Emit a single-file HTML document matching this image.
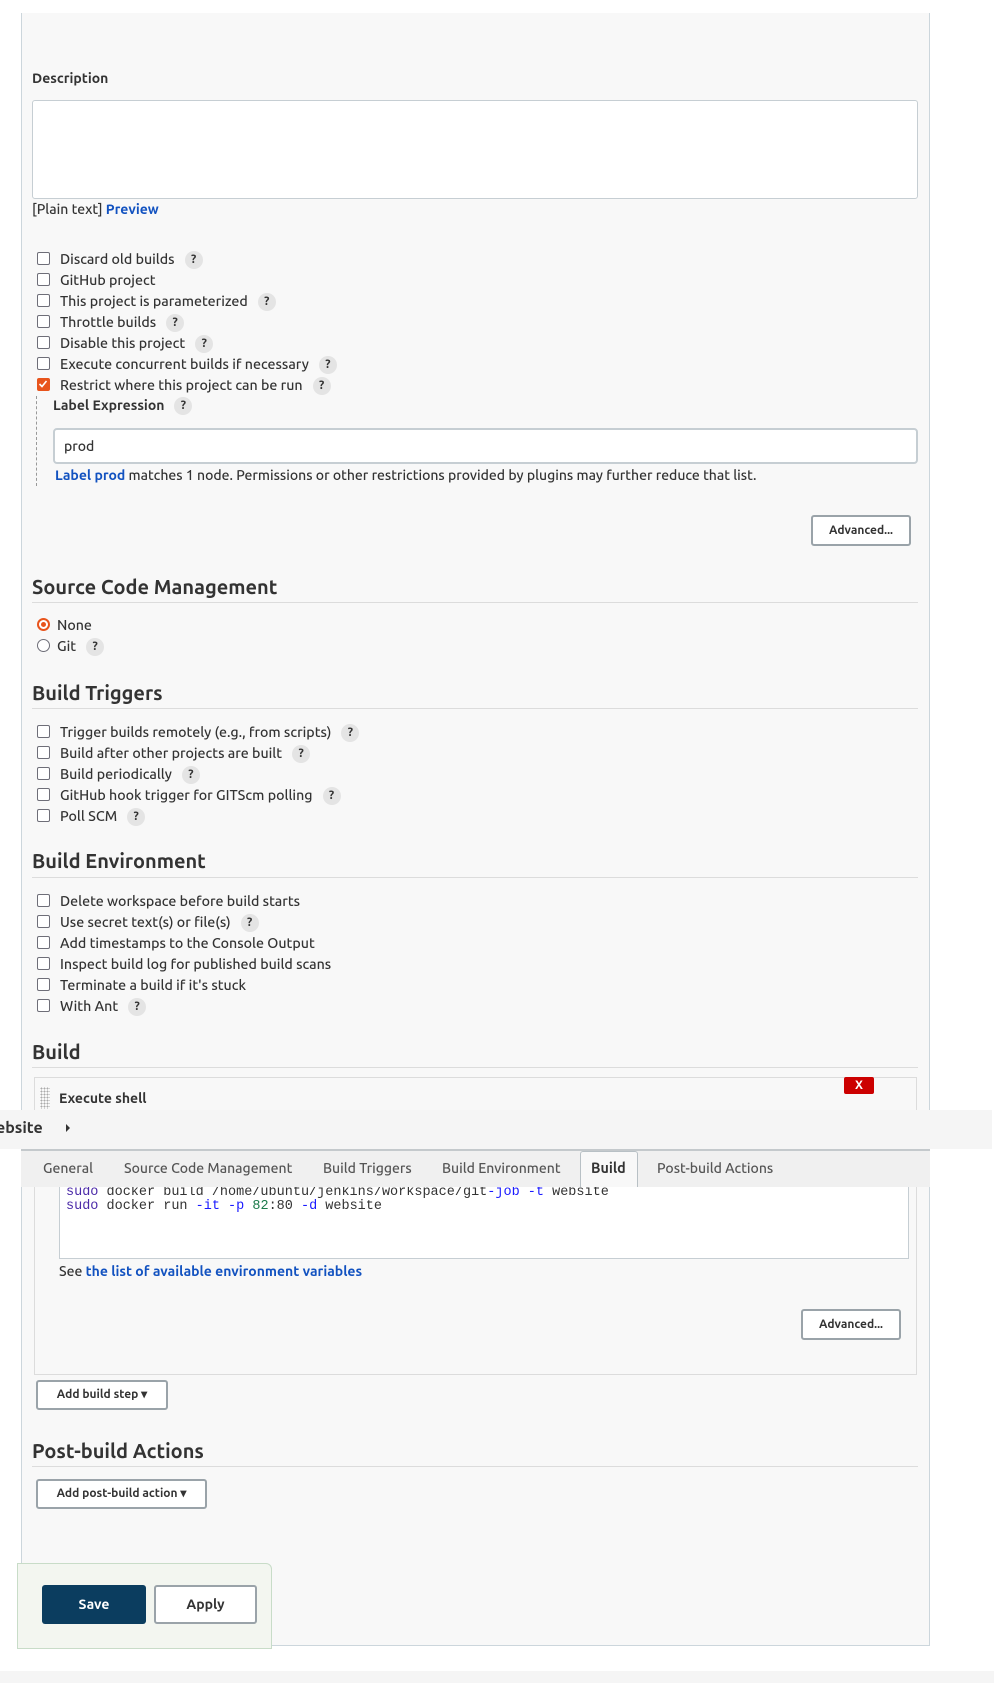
<!DOCTYPE html>
<html><head><meta charset="utf-8">
<style>
*{box-sizing:border-box;margin:0;padding:0}
body{width:994px;height:1683px;background:#fff;font-family:"Ubuntu","Liberation Sans",sans-serif;font-size:14px;color:#333;position:relative;overflow:hidden}
.a{position:absolute;white-space:nowrap}
.panel{position:absolute;left:21px;top:13px;width:909px;height:1633px;background:#f8f8f8;border-left:1px solid #ccd6dc;border-right:1px solid #ccd6dc;border-bottom:1px solid #ccd6dc}
.cb{position:absolute;left:37px;width:13px;height:13px;border:1.5px solid #6e6e78;border-radius:2px;background:#fff}
.cb.on{background:#e8541c;border-color:#e8541c}
.lbl{position:absolute;left:60px;white-space:nowrap;font-size:14.2px;font-weight:500;color:#333;line-height:16px}
.q{display:inline-block;width:18px;height:18px;border-radius:50%;background:#e4e4e4;color:#333;font-weight:bold;font-size:12px;text-align:center;line-height:18px;margin-left:10px;vertical-align:middle}
h2{position:absolute;left:32px;font-size:20px;font-weight:bold;color:#333;white-space:nowrap}
.hr{position:absolute;left:32px;width:886px;height:1px;background:#dcdcdc}
.btn{position:absolute;border:2px solid #9aa3a9;border-radius:3px;background:#fff;font-size:12px;font-weight:bold;color:#333;text-align:center}
a{color:#1252c0;font-weight:bold;text-decoration:none}
</style></head><body>
<div class="panel"></div>

<div class="a" style="left:32px;top:70px;font-weight:bold;font-size:14px">Description</div>
<div class="a" style="left:32px;top:100px;width:886px;height:99px;background:#fff;border:1px solid #c6ced3;border-radius:3px"></div>
<div class="a" style="left:32px;top:201px;font-weight:500">[Plain text] <a>Preview</a></div>

<div class="cb" style="top:252px"></div><div class="lbl" style="top:251px">Discard old builds<span class="q">?</span></div>
<div class="cb" style="top:273px"></div><div class="lbl" style="top:272px">GitHub project</div>
<div class="cb" style="top:294px"></div><div class="lbl" style="top:293px">This project is parameterized<span class="q">?</span></div>
<div class="cb" style="top:315px"></div><div class="lbl" style="top:314px">Throttle builds<span class="q">?</span></div>
<div class="cb" style="top:336px"></div><div class="lbl" style="top:335px">Disable this project<span class="q">?</span></div>
<div class="cb" style="top:357px"></div><div class="lbl" style="top:356px">Execute concurrent builds if necessary<span class="q">?</span></div>
<div class="cb on" style="top:378px"><svg width="10" height="10" viewBox="0 0 10 10" style="position:absolute;left:0;top:0"><path d="M1.5 5 L4 7.5 L8.5 2" stroke="#fff" stroke-width="1.6" fill="none"/></svg></div><div class="lbl" style="top:377px">Restrict where this project can be run<span class="q">?</span></div>

<div class="a" style="left:36px;top:396px;height:90px;border-left:1px dashed #999"></div>
<div class="a" style="left:53px;top:397px;font-weight:bold">Label Expression<span class="q">?</span></div>
<div class="a" style="left:53px;top:428px;width:865px;height:36px;background:#fff;border:2px solid #c6ced3;border-radius:4px;padding:8px 9px;font-size:14px;font-weight:500">prod</div>
<div class="a" style="left:55px;top:467px;font-size:14px;font-weight:500"><a>Label prod</a> matches 1 node. Permissions or other restrictions provided by plugins may further reduce that list.</div>
<div class="btn" style="left:811px;top:515px;width:100px;height:31px;line-height:27px">Advanced...</div>

<h2 style="top:575px">Source Code Management</h2><div class="hr" style="top:602px"></div>
<div class="a" style="left:37px;top:618px;width:13px;height:13px;border-radius:50%;border:2px solid #e8541c;background:#fff"><div style="position:absolute;left:2px;top:2px;width:5px;height:5px;border-radius:50%;background:#e8541c"></div></div>
<div class="lbl" style="left:57px;top:617px">None</div>
<div class="a" style="left:37px;top:639px;width:13px;height:13px;border-radius:50%;border:1.5px solid #6e6e78;background:#fff"></div>
<div class="lbl" style="left:57px;top:638px">Git<span class="q">?</span></div>

<h2 style="top:681px">Build Triggers</h2><div class="hr" style="top:708px"></div>
<div class="cb" style="top:725px"></div><div class="lbl" style="top:724px">Trigger builds remotely (e.g., from scripts)<span class="q">?</span></div>
<div class="cb" style="top:746px"></div><div class="lbl" style="top:745px">Build after other projects are built<span class="q">?</span></div>
<div class="cb" style="top:767px"></div><div class="lbl" style="top:766px">Build periodically<span class="q">?</span></div>
<div class="cb" style="top:788px"></div><div class="lbl" style="top:787px">GitHub hook trigger for GITScm polling<span class="q">?</span></div>
<div class="cb" style="top:809px"></div><div class="lbl" style="top:808px">Poll SCM<span class="q">?</span></div>

<h2 style="top:849px">Build Environment</h2><div class="hr" style="top:877px"></div>
<div class="cb" style="top:894px"></div><div class="lbl" style="top:893px">Delete workspace before build starts</div>
<div class="cb" style="top:915px"></div><div class="lbl" style="top:914px">Use secret text(s) or file(s)<span class="q">?</span></div>
<div class="cb" style="top:936px"></div><div class="lbl" style="top:935px">Add timestamps to the Console Output</div>
<div class="cb" style="top:957px"></div><div class="lbl" style="top:956px">Inspect build log for published build scans</div>
<div class="cb" style="top:978px"></div><div class="lbl" style="top:977px">Terminate a build if it's stuck</div>
<div class="cb" style="top:999px"></div><div class="lbl" style="top:998px">With Ant<span class="q">?</span></div>

<h2 style="top:1040px">Build</h2><div class="hr" style="top:1067px"></div>
<div class="a" style="left:34px;top:1077px;width:883px;height:298px;border:1px solid #dcdcdc;background:#f8f8f8"></div>
<div class="a" style="left:40px;top:1087px;width:10px;height:22px;background-image:radial-gradient(#aaa 0.8px,transparent 0.9px);background-size:3px 3px"></div>
<div class="a" style="left:59px;top:1090px;font-weight:bold">Execute shell</div>
<div class="a" style="left:844px;top:1077px;width:30px;height:17px;background:#cc0000;border-radius:2px;color:#fff;font-weight:bold;font-size:12px;text-align:center;line-height:17px">X</div>

<div class="a" style="left:59px;top:1185px;width:850px;height:74px;background:#fff;border:1px solid #c6ced3"></div>
<div class="a" style="left:66px;top:1186px;font-family:'Liberation Mono',monospace;font-size:13.5px;line-height:14px;color:#333"><span style="color:#4b2aa8">sudo</span> docker build /home/ubuntu/jenkins/workspace/git<span style="color:#1a1aff">-job</span> <span style="color:#1a1aff">-t</span> website<br><span style="color:#4b2aa8">sudo</span> docker run <span style="color:#1a1aff">-it</span> <span style="color:#1a1aff">-p</span> <span style="color:#1a7a4a">82</span>:80 <span style="color:#1a1aff">-d</span> website</div>

<div class="a" style="left:0;top:1110px;width:992px;height:39px;background:#f5f5f5"></div>
<div class="a" style="left:-4px;top:1119px;font-weight:bold;font-size:16px;color:#333">ebsite</div>
<div class="a" style="left:66px;top:1124px;width:0;height:0;border-top:4px solid transparent;border-bottom:4px solid transparent;border-left:4px solid #333"></div>

<div class="a" style="left:21px;top:1149px;width:909px;height:38px;background:#f0f0f0;border-top:2px solid #c4c9cc"></div>
<div class="a" style="left:580px;top:1151px;width:58px;height:36px;background:#f8f8f8;border:1px solid #b8c0c5;border-bottom:none;border-radius:3px 3px 0 0"></div>
<div class="a" style="left:43px;top:1160px;color:#555;font-size:14px;font-weight:500">General</div>
<div class="a" style="left:124px;top:1160px;color:#555;font-size:14px;font-weight:500">Source Code Management</div>
<div class="a" style="left:323px;top:1160px;color:#555;font-size:14px;font-weight:500">Build Triggers</div>
<div class="a" style="left:442px;top:1160px;color:#555;font-size:14px;font-weight:500">Build Environment</div>
<div class="a" style="left:591px;top:1160px;font-weight:bold;color:#333;font-size:14.3px">Build</div>
<div class="a" style="left:657px;top:1160px;color:#555;font-size:14px;font-weight:500">Post-build Actions</div>

<div class="a" style="left:59px;top:1263px;font-weight:500">See <a>the list of available environment variables</a></div>
<div class="btn" style="left:801px;top:1309px;width:100px;height:31px;line-height:27px">Advanced...</div>
<div class="btn" style="left:36px;top:1380px;width:132px;height:30px;line-height:26px">Add build step &#9662;</div>

<h2 style="top:1439px">Post-build Actions</h2><div class="hr" style="top:1466px"></div>
<div class="btn" style="left:36px;top:1479px;width:171px;height:30px;line-height:26px">Add post-build action &#9662;</div>

<div class="a" style="left:17px;top:1563px;width:255px;height:86px;background:#f3f6f0;border:1px solid #c8dcc8;border-radius:0 6px 0 0"></div>
<div class="a" style="left:42px;top:1585px;width:104px;height:39px;background:#0b3d5f;border-radius:3px;color:#fff;font-weight:bold;text-align:center;line-height:39px">Save</div>
<div class="btn" style="left:154px;top:1585px;width:103px;height:39px;line-height:35px;font-size:14px">Apply</div>

<div class="a" style="left:0;top:1671px;width:994px;height:12px;background:#f5f5f5"></div>
</body></html>
